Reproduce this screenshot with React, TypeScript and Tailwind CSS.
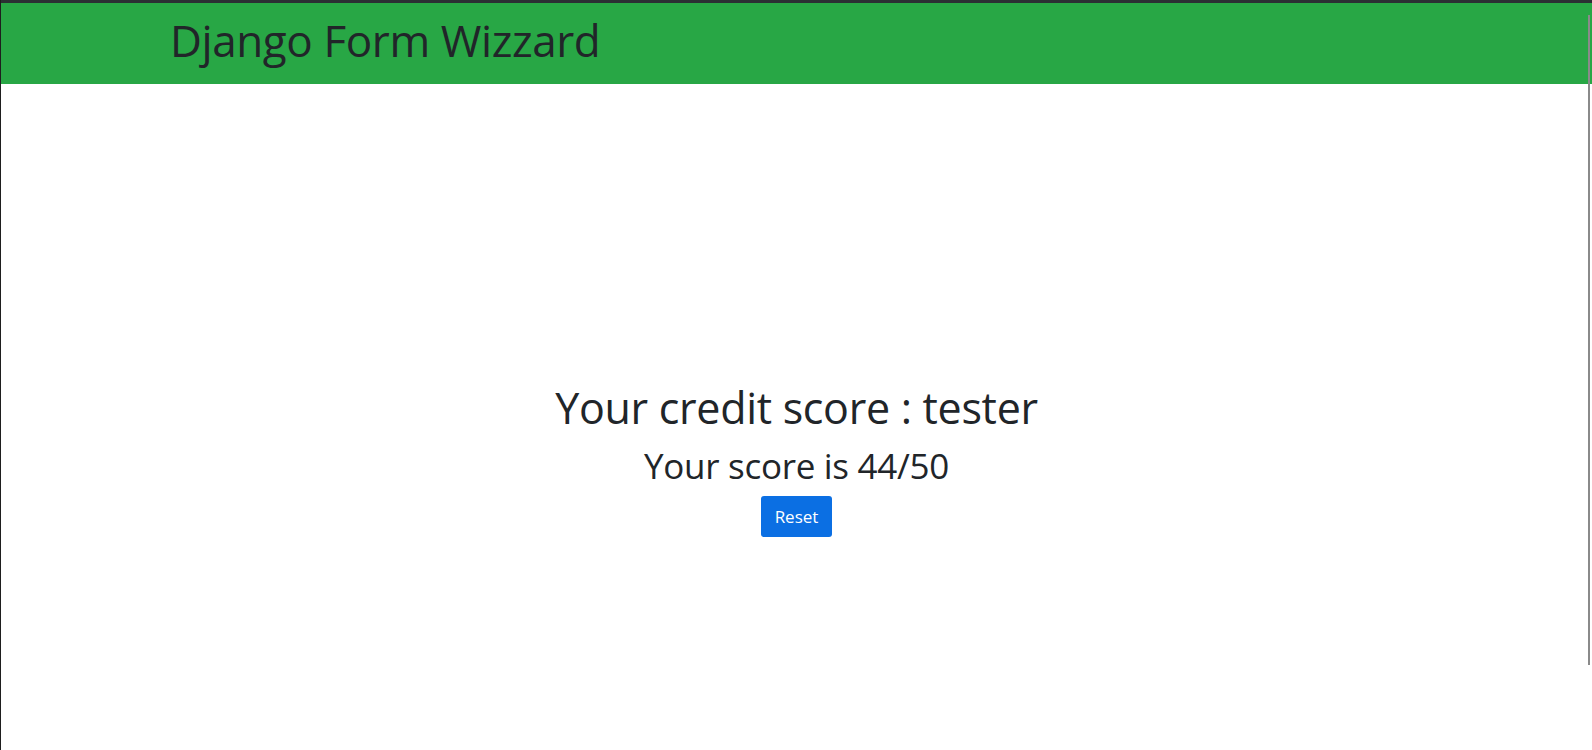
export default function App() {
  return (
    <div
      className="w-[1592px] h-[750px] bg-white flex flex-col border-l border-[#1e1e1e] relative overflow-hidden"
      style={{ fontFamily: '"Open Sans", "Noto Sans", sans-serif' }}
    >
      <div className="h-[3px] bg-[#2b2f33]" />
      <header className="h-[81px] bg-[#28a745] flex items-start pt-[15px] pl-[169px]">
        <h1 className="text-[44px] font-normal text-[#212529] leading-none tracking-[-0.4px]">
          Django Form Wizzard
        </h1>
      </header>
      <main className="flex-1 flex flex-col items-center pt-[299px] text-[#212529]">
        <h2 className="text-[43px] leading-[50px] font-normal tracking-[-0.3px]">Your credit score : tester</h2>
        <p className="text-[35px] leading-[40px] mt-[13px] tracking-[-0.3px]">Your score is 44/50</p>
        <button className="mt-[10px] w-[71px] h-[41px] rounded-[3px] bg-[#0b6fe3] text-white text-[17px]">
          Reset
        </button>
      </main>
      <div className="absolute right-[2px] top-[15px] h-[650px] w-[2px] bg-[#8a8a8a]" />
    </div>
  );
}
